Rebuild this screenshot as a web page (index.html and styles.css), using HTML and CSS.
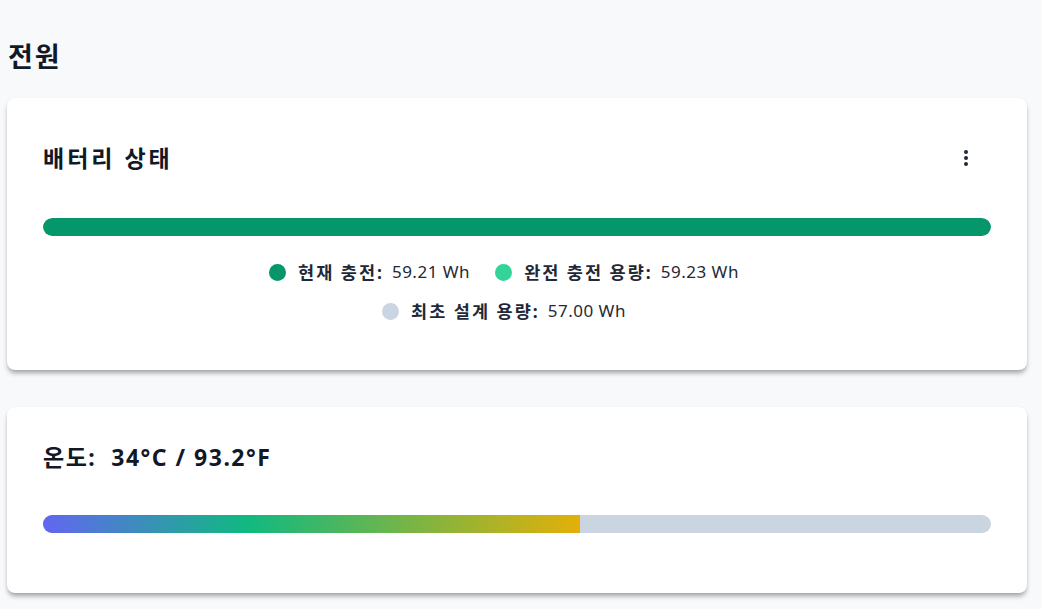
FILE: index.html
```html
<!DOCTYPE html>
<html lang="ko">
    <head>
        <meta charset="UTF-8" />
        <meta name="viewport" content="width=device-width, initial-scale=1.0" />
        <title>전원</title>
        <link rel="stylesheet" href="styles.css">
    </head>
    <body>
        <h1 class="page-title">전원</h1>

        <div class="card">
            <div class="card-head">
                <h2 class="card-title ko">배터리 상태</h2>
                <button class="menu-btn" aria-label="더보기">
                    <svg width="4" height="16" viewBox="0 0 4 16">
                        <circle cx="2" cy="2" r="2" />
                        <circle cx="2" cy="8" r="2" />
                        <circle cx="2" cy="14" r="2" />
                    </svg>
                </button>
            </div>

            <div class="bar">
                <div class="bar-fill battery" style="width: 100%"></div>
            </div>

            <div class="legend">
                <div class="legend-item">
                    <span class="dot dot-current"></span>
                    <strong>현재 충전:</strong>
                    <span class="value">59.21 Wh</span>
                </div>
                <div class="legend-item">
                    <span class="dot dot-full"></span>
                    <strong>완전 충전 용량:</strong>
                    <span class="value">59.23 Wh</span>
                </div>
                <div class="legend-item">
                    <span class="dot dot-design"></span>
                    <strong>최초 설계 용량:</strong>
                    <span class="value">57.00 Wh</span>
                </div>
            </div>
        </div>

        <div class="card card-temp">
            <h2 class="card-title">온도:&nbsp; 34°C / 93.2°F</h2>
            <div class="bar">
                <div class="bar-fill temp" style="width: 56.6%"></div>
            </div>
        </div>
    </body>
</html>
```

FILE: styles.css
```css
body {
    margin: 0;
    padding: 0 15px 20px 7px;
    background: #f8f9fb;
    font-family: "Noto Sans", "Noto Sans CJK KR", sans-serif;
    color: #111827;
}
.page-title {
    font-size: 27px;
    font-weight: 700;
    letter-spacing: 2px;
    margin: 0;
    padding: 39px 0 0 1px;
    line-height: 36px;
}
.card {
    background: white;
    border-radius: 8px;
    margin-top: 23px;
    padding: 44px 36px 45px;
    box-shadow: 0 4px 5px -1px rgba(0, 0, 0, 0.35), 0 0 2px rgba(0, 0, 0, 0.06);
}
.card + .card {
    margin-top: 37px;
}
.card-head {
    display: flex;
    align-items: center;
    justify-content: space-between;
    height: 32px;
}
.card-title {
    font-size: 23px;
    font-weight: 700;
    letter-spacing: 1.5px;
    margin: 0;
    line-height: 32px;
}
.card-title.ko {
    letter-spacing: 3px;
}
.menu-btn {
    background: none;
    border: 0;
    width: 50px;
    height: 32px;
    padding: 0;
    cursor: pointer;
    display: flex;
    align-items: center;
    justify-content: center;
}
.menu-btn svg {
    fill: #1f2937;
}
.bar {
    height: 18px;
    margin-top: 44px;
    background: #cbd5e1;
    border-radius: 9px;
    overflow: hidden;
}
.bar-fill {
    height: 100%;
}
.bar-fill.battery {
    background: #059669;
    border-radius: 9px;
}
.bar-fill.temp {
    background: linear-gradient(90deg, #6366f1 0%, #10b981 38%, #e3b008 100%);
}
.legend {
    display: flex;
    flex-wrap: wrap;
    justify-content: center;
    column-gap: 25px;
    row-gap: 11px;
    max-width: 660px;
    margin: 22px auto 0;
    padding-right: 26px;
    font-size: 17px;
    line-height: 28px;
    color: #1f2937;
}
.legend-item {
    display: flex;
    align-items: center;
}
.legend-item strong {
    margin-left: 12px;
    font-size: 17.5px;
    font-weight: 700;
    letter-spacing: 2px;
}
.legend-item .value {
    margin-left: 8px;
    letter-spacing: 0.5px;
}
.dot {
    width: 17px;
    height: 17px;
    border-radius: 50%;
}
.dot-current {
    background: #059669;
}
.dot-full {
    background: #34d399;
}
.dot-design {
    background: #cbd5e1;
}
.card-temp {
    padding-top: 34px;
    padding-bottom: 60px;
}
.card-temp .bar {
    margin-top: 42px;
}
```
